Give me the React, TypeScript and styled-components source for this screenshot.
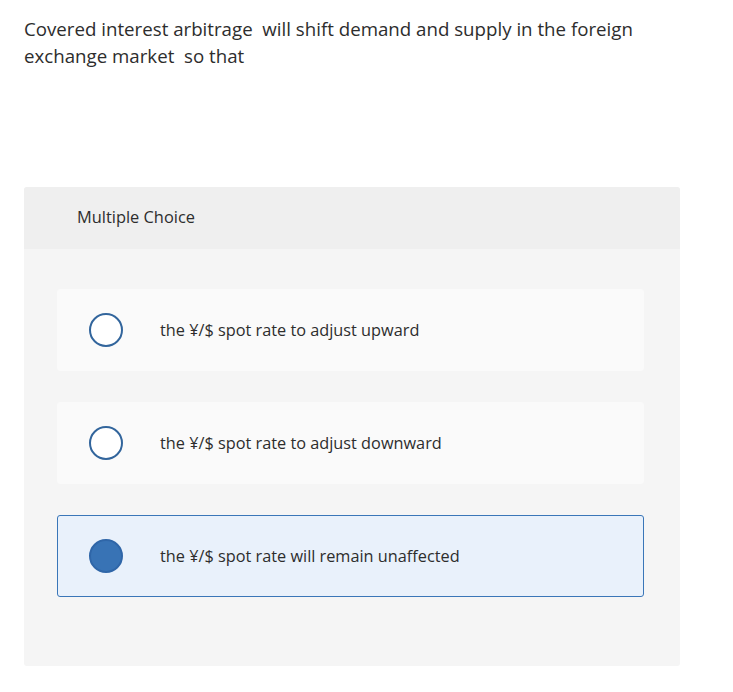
import { useState } from 'react'
import styled, { createGlobalStyle } from 'styled-components'

const GlobalStyle = createGlobalStyle`
  body {
    margin: 0;
    background: #ffffff;
    font-family: "Open Sans", "Liberation Sans", sans-serif;
    color: #2d2d2d;
  }
`

const Page = styled.div`
  padding: 15px 24px 26px 24px;
  width: 656px;
`

const Question = styled.p`
  margin: 0;
  font-size: 18.7px;
  line-height: 27px;
  white-space: pre-wrap;
  max-width: 640px;
`

const Card = styled.section`
  margin-top: 118px;
  background: #f5f5f5;
  border-radius: 3px;
  overflow: hidden;
`

const CardHeader = styled.div`
  height: 62px;
  display: flex;
  align-items: center;
  padding-left: 53px;
  padding-bottom: 3px;
  box-sizing: border-box;
  background: #efefef;
  font-size: 16.4px;
`

const Options = styled.div`
  display: flex;
  flex-direction: column;
  gap: 31px;
  padding: 40px 36px 69px 33px;
`

const Option = styled.label<{ $selected: boolean }>`
  height: 82px;
  box-sizing: border-box;
  display: flex;
  align-items: center;
  padding-left: 31px;
  border-radius: 3px;
  background: ${p => (p.$selected ? '#e9f1fb' : '#fafafa')};
  border: 1px solid ${p => (p.$selected ? '#3a76b8' : '#fafafa')};
  cursor: pointer;
  font-size: 16.3px;
`

const Radio = styled.span<{ $selected: boolean }>`
  width: 34px;
  height: 34px;
  box-sizing: border-box;
  border-radius: 50%;
  border: 2px solid ${p => (p.$selected ? '#2f66a8' : '#32659c')};
  background: ${p => (p.$selected ? '#3873b5' : '#ffffff')};
  flex-shrink: 0;
`

const OptionText = styled.span`
  margin-left: 37px;
`

const choices = [
  'the ¥/$ spot rate to adjust upward',
  'the ¥/$ spot rate to adjust downward',
  'the ¥/$ spot rate will remain unaffected',
]

export default function App() {
  const [selected, setSelected] = useState(2)

  return (
    <Page>
      <GlobalStyle />
      <Question>
        {'Covered interest arbitrage  will shift demand and supply in the foreign exchange market  so that'}
      </Question>
      <Card>
        <CardHeader>Multiple Choice</CardHeader>
        <Options>
          {choices.map((text, i) => (
            <Option key={i} $selected={selected === i} onClick={() => setSelected(i)}>
              <Radio $selected={selected === i} />
              <OptionText>{text}</OptionText>
            </Option>
          ))}
        </Options>
      </Card>
    </Page>
  )
}
